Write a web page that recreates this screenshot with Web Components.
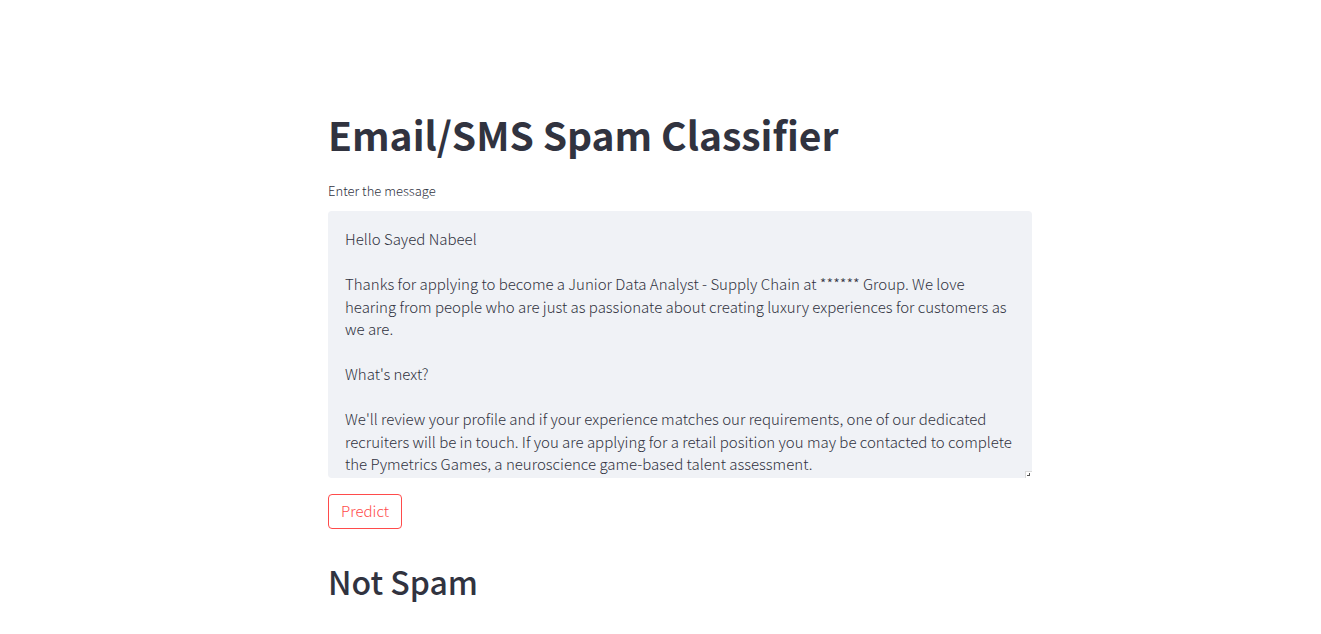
<!DOCTYPE html>
<html lang="en"><head><meta charset="utf-8"><title>Email/SMS Spam Classifier</title>
<style>body{margin:0;background:#fff;color:#31333f;font-family:"Noto Sans CJK SC","Noto Sans",sans-serif}</style></head>
<body>
<app-page>
<app-heading level="1">Email/SMS Spam Classifier</app-heading>
<message-field></message-field>
<predict-button>Predict</predict-button>
<app-heading level="2">Not Spam</app-heading>
</app-page>
<script>
class Base extends HTMLElement{
  connectedCallback(){ if(!this.shadowRoot) this.attachShadow({mode:"open"}).innerHTML=this.view(); }
}
customElements.define("app-page",class extends Base{view(){return `
<style>:host{display:block;padding-left:39px}
main{box-sizing:border-box;max-width:736px;margin:0 auto;padding:96px 16px 0;display:flex;flex-direction:column;gap:16px}</style>
<main><slot></slot></main>`}});
customElements.define("app-heading",class extends Base{view(){
const t=this.getAttribute("level")==="1"?"h1":"h2";return `
<style>:host{display:block}h1,h2{margin:0}
h1{font-size:39px;font-weight:700;line-height:47px;padding:15px 0 7px}
h2{font-size:32px;font-weight:500;line-height:42px;padding:15px 0}</style>
<${t}><slot></slot></${t}>`}});
customElements.define("message-field",class extends Base{
view(){return `
<style>:host{display:block}
label{display:block;font-size:13px;line-height:19px;margin-bottom:11px;font-weight:300}
textarea{display:block;box-sizing:border-box;width:100%;height:267px;margin:0;padding:17px;border:0;border-radius:4px;background:#f0f2f6;color:inherit;font-family:inherit;font-size:15px;font-weight:300;line-height:1.5;resize:vertical;outline:0;overflow-x:hidden;overflow-y:auto}
/* small white grip in the lower right corner */
textarea::-webkit-resizer{background:
linear-gradient(#555,#555) 12px 10px/1px 3px no-repeat,
linear-gradient(#555,#555) 10px 12px/2px 1px no-repeat,
linear-gradient(#fff,#fff) 9px 9px/6px 6px no-repeat,
linear-gradient(#d9d9d9,#d9d9d9) 8px 8px/7px 7px no-repeat}</style>
<label for="m">Enter the message</label>
<textarea id="m" spellcheck="false">Hello Sayed Nabeel

Thanks for applying to become a Junior Data Analyst - Supply Chain at ****** Group. We love hearing from people who are just as passionate about creating luxury experiences for customers as we are.

What's next?

We'll review your profile and if your experience matches our requirements, one of our dedicated recruiters will be in touch. If you are applying for a retail position you may be contacted to complete the Pymetrics Games, a neuroscience game-based talent assessment.</textarea>`}});
customElements.define("predict-button",class extends Base{view(){return `
<style>:host{display:block}
button{display:block;padding:4px 12px 5px;border:1px solid #ff4b4b;border-radius:4px;background:#fff;color:#ff4b4b;font-family:inherit;font-size:15px;font-weight:300;line-height:24px}</style>
<button type="button"><slot></slot></button>`}});
</script>
</body></html>
